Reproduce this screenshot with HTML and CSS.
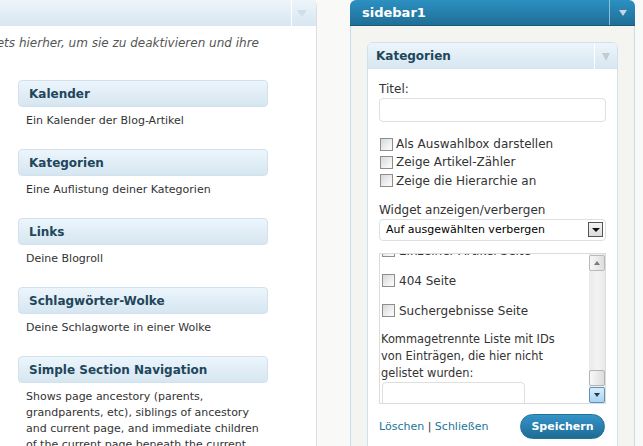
FILE: index.html
```html
<!DOCTYPE html>
<html lang="de">
<head>
<meta charset="utf-8">
<title>Widgets</title>
<link rel="stylesheet" href="styles.css">
</head>
<body>
<div class="page">
  <section class="avail">
    <div class="avail-head"><span class="toggle"><i class="tri tri-light"></i></span></div>
    <div class="avail-desc"><p>Ziehe Widgets hierher, um sie zu deaktivieren und ihre</p></div>
    <div class="widget-list">
      <div class="widget">
        <div class="widget-top"><h4>Kalender</h4></div>
        <p class="widget-desc">Ein Kalender der Blog-Artikel</p>
      </div>
      <div class="widget">
        <div class="widget-top"><h4>Kategorien</h4></div>
        <p class="widget-desc">Eine Auflistung deiner Kategorien</p>
      </div>
      <div class="widget">
        <div class="widget-top"><h4>Links</h4></div>
        <p class="widget-desc">Deine Blogroll</p>
      </div>
      <div class="widget">
        <div class="widget-top"><h4>Schlagwörter-Wolke</h4></div>
        <p class="widget-desc">Deine Schlagworte in einer Wolke</p>
      </div>
      <div class="widget">
        <div class="widget-top"><h4>Simple Section Navigation</h4></div>
        <p class="widget-desc">Shows page ancestory (parents, grandparents, etc), siblings of ancestory and current page, and immediate children of the current page beneath the current</p>
      </div>
    </div>
  </section>

  <section class="sidebar">
    <div class="sidebar-head">
      <h3>sidebar1</h3>
      <span class="toggle toggle-dark"><i class="tri tri-head"></i></span>
    </div>
    <div class="sidebar-body">
      <div class="sb-widget">
        <div class="sb-widget-top">
          <h4>Kategorien</h4>
          <span class="toggle toggle-small"><i class="tri tri-gray"></i></span>
        </div>
        <div class="widget-inside">
          <label class="field-label">Titel:</label>
          <input class="text-input" type="text">
          <div class="checks">
            <label class="check"><input type="checkbox"><span>Als Auswahlbox darstellen</span></label>
            <label class="check"><input type="checkbox"><span>Zeige Artikel-Zähler</span></label>
            <label class="check"><input type="checkbox"><span>Zeige die Hierarchie an</span></label>
          </div>
          <div class="field-label label-gap">Widget anzeigen/verbergen</div>
          <div class="select">
            <span class="select-value">Auf ausgewählten verbergen</span>
            <span class="select-btn"><i class="tri tri-black"></i></span>
          </div>
          <div class="scroll-list">
            <div class="scroll-view">
              <div class="scroll-inner">
                <label class="check list-check"><input type="checkbox"><span>Einzelner Artikel Seite</span></label>
                <label class="check list-check"><input type="checkbox"><span>404 Seite</span></label>
                <label class="check list-check"><input type="checkbox"><span>Suchergebnisse Seite</span></label>
                <p class="ids-note">Kommagetrennte Liste mit IDs von Einträgen, die hier nicht gelistet wurden:</p>
                <input class="ids-input" type="text">
              </div>
            </div>
            <div class="scrollbar">
              <span class="sb-btn"><i class="tri-up"></i></span>
              <span class="sb-track"><span class="sb-thumb"></span></span>
              <span class="sb-btn sb-btn-hover"><i class="tri tri-tiny"></i></span>
            </div>
          </div>
          <div class="widget-actions">
            <span class="links"><a href="#">Löschen</a> | <a href="#">Schließen</a></span>
            <button class="save" type="button">Speichern</button>
          </div>
        </div>
      </div>
    </div>
  </section>
</div>
</body>
</html>
```

FILE: styles.css
```css
html, body {
  margin: 0;
  padding: 0;
}
body {
  background: #f9f9f8;
  font-family: "DejaVu Sans", Verdana, sans-serif;
  color: #333;
  overflow: hidden;
}
.page {
  display: flex;
  align-items: flex-start;
  height: 446px;
  overflow: hidden;
}

/* ---------- left panel ---------- */
.avail {
  flex: none;
  width: 316px;
  min-height: 470px;
  background: #fff;
  border-right: 1px solid #dfdfdf;
  border-top-right-radius: 6px;
}
.avail-head {
  height: 26px;
  display: flex;
  justify-content: flex-end;
  background: linear-gradient(#edf5fb, #d7e6f0);
  border-top-right-radius: 6px;
}
.toggle {
  display: flex;
  align-items: center;
  justify-content: center;
  width: 24px;
  border-left: 1px solid #fff;
}
.tri {
  display: block;
  width: 0;
  height: 0;
  border-left: 5px solid transparent;
  border-right: 5px solid transparent;
  border-top: 7px solid #cbdce8;
}
.tri-light { border-top-color: #cfdfea; margin-left: -5px; }
.avail-desc {
  width: 259px;
  margin-top: 9px;
  display: flex;
  justify-content: flex-end;
  overflow: hidden;
}
.avail-desc p {
  margin: 0;
  white-space: nowrap;
  font-style: italic;
  font-size: 12px;
  line-height: 16px;
  color: #555;
}
.widget-list {
  padding-left: 18px;
  margin-top: 29px;
}
.widget {
  width: 250px;
}
.widget-top {
  height: 25px;
  display: flex;
  align-items: center;
  border: 1px solid #d1e2ee;
  border-radius: 4px;
  background: linear-gradient(#ecf5fc, #d6e6f0);
}
.widget-top h4,
.sb-widget-top h4 {
  margin: 0;
  padding-left: 10px;
  font-size: 12px;
  font-weight: bold;
  color: #21465c;
}
.widget-desc {
  margin: 6px 0 20px;
  padding: 0 0 0 8px;
  font-size: 11px;
  line-height: 16px;
  color: #333;
}

/* ---------- sidebar ---------- */
.sidebar {
  flex: none;
  width: 285px;
  margin-left: 33px;
}
.sidebar-head {
  height: 25px;
  display: flex;
  align-items: stretch;
  border-bottom: 1px solid #1a5a7b;
  border-radius: 6px 6px 0 0;
  background: linear-gradient(#2c90c1, #1f6f97);
}
.sidebar-head h3 {
  flex: 1;
  margin: 0;
  padding-left: 12px;
  font-size: 13px;
  line-height: 25px;
  color: #fff;
}
.toggle-dark {
  width: 25px;
  border-left: 1px solid #8cbfdb;
}
.tri-head { border-top-color: #c9d6df; border-left-width: 4px; border-right-width: 4px; border-top-width: 6px; }
.sidebar-body {
  min-height: 440px;
  padding: 16px 16px 0;
  background: #f4f4f0;
  border-left: 1px solid #cadcea;
  border-right: 1px solid #cadcea;
}
.sb-widget {
  width: 249px;
  min-height: 430px;
  background: #fff;
  border: 1px solid #d0e1ed;
  border-radius: 6px 6px 0 0;
}
.sb-widget-top {
  height: 26px;
  display: flex;
  align-items: stretch;
  justify-content: space-between;
  border-radius: 5px 5px 0 0;
  background: linear-gradient(#edf5fb, #d6e6f0);
}
.sb-widget-top h4 {
  padding-left: 8px;
  line-height: 26px;
}
.toggle-small {
  width: 22px;
}
.tri-gray { border-top-color: #c3cbd0; border-left-width: 4px; border-right-width: 4px; border-top-width: 8px; margin-top: 2px; }

.widget-inside {
  padding: 12px 11px 20px;
  font-size: 12px;
  color: #333;
}
.field-label {
  display: block;
  line-height: 17px;
}
.label-gap {
  margin-top: 1px;
}
.text-input {
  display: block;
  box-sizing: border-box;
  width: 100%;
  height: 24px;
  margin: 0 0 13px;
  border: 1px solid #dfdfdf;
  border-radius: 4px;
  background: #fff;
}
.checks {
  margin-bottom: 12px;
}
.check {
  display: flex;
  align-items: center;
  gap: 3px;
  height: 18.3px;
  white-space: nowrap;
}
.check input {
  -webkit-appearance: none;
  appearance: none;
  box-sizing: border-box;
  flex: none;
  width: 13px;
  height: 13px;
  margin: 0 0 0 1px;
  border: 1px solid #8d8d8d;
  background: linear-gradient(135deg, #d8d8d8, #f7f7f7 80%);
}
.select {
  box-sizing: border-box;
  height: 22px;
  margin-bottom: 12px;
  display: flex;
  align-items: center;
  justify-content: space-between;
  padding: 0 2px 0 6px;
  border: 1px solid #dfdfdf;
  border-radius: 4px;
  background: #fff;
}
.select-value {
  font-size: 11px;
  color: #000;
}
.select-btn {
  box-sizing: border-box;
  width: 15px;
  height: 15px;
  display: flex;
  align-items: center;
  justify-content: center;
  border: 1px solid #555;
  background: linear-gradient(#f4f4f4, #dcdcdc);
}
.tri-black {
  border-top-color: #111;
  border-left-width: 4px;
  border-right-width: 4px;
  border-top-width: 4px;
}

.scroll-list {
  box-sizing: border-box;
  height: 151px;
  display: flex;
  border: 1px solid #dcdcdc;
  background: #fff;
}
.scroll-view {
  flex: 1;
  overflow: hidden;
}
.scroll-inner {
  margin-top: -18px;
  padding: 0 10px 0 1px;
}
.list-check {
  height: 30px;
  gap: 4px;
}
.ids-note {
  margin: 5px 0 0;
  font-size: 11.4px;
  line-height: 17px;
}
.ids-input {
  display: block;
  box-sizing: border-box;
  width: 143px;
  height: 28px;
  margin: 0 0 0 1px;
  border: 1px solid #dfdfdf;
  border-radius: 4px;
}
.scrollbar {
  flex: none;
  width: 16px;
  display: flex;
  flex-direction: column;
  background: linear-gradient(90deg, #e9e9e9, #f3f3f3 50%, #e9e9e9);
}
.sb-btn {
  box-sizing: border-box;
  height: 16px;
  margin-top: 1px;
  display: flex;
  align-items: center;
  justify-content: center;
  border: 1px solid #b9b9b9;
  border-radius: 2px;
  background: linear-gradient(90deg, #f6f6f6, #dedede);
}
.sb-btn-hover {
  margin-top: 1px;
  border-color: #5e93bd;
  background: linear-gradient(#d8edfb, #a9d3f1);
}
.tri-up {
  display: block;
  width: 0;
  height: 0;
  border-left: 3px solid transparent;
  border-right: 3px solid transparent;
  border-bottom: 4px solid #7a7a7a;
}
.tri-tiny {
  border-top-color: #1d3d55;
  border-left-width: 3px;
  border-right-width: 3px;
  border-top-width: 4px;
}
.sb-track {
  flex: 1;
  display: flex;
  flex-direction: column;
  justify-content: flex-end;
}
.sb-thumb {
  box-sizing: border-box;
  height: 16px;
  border: 1px solid #b3b3b3;
  border-radius: 2px;
  background: linear-gradient(90deg, #f8f8f8, #dcdcdc);
}

.widget-actions {
  margin-top: 10px;
  display: flex;
  align-items: center;
  justify-content: space-between;
}
.links {
  font-size: 11px;
  color: #333;
}
.links a {
  color: #21759b;
  text-decoration: none;
}
.save {
  box-sizing: border-box;
  width: 85px;
  height: 25px;
  margin-right: 1px;
  padding: 0;
  border: 1px solid #21759b;
  border-radius: 13px;
  background: linear-gradient(#3593c6, #1e6c96);
  color: #fff;
  font-family: "DejaVu Sans", Verdana, sans-serif;
  font-size: 11px;
  font-weight: bold;
}
```
